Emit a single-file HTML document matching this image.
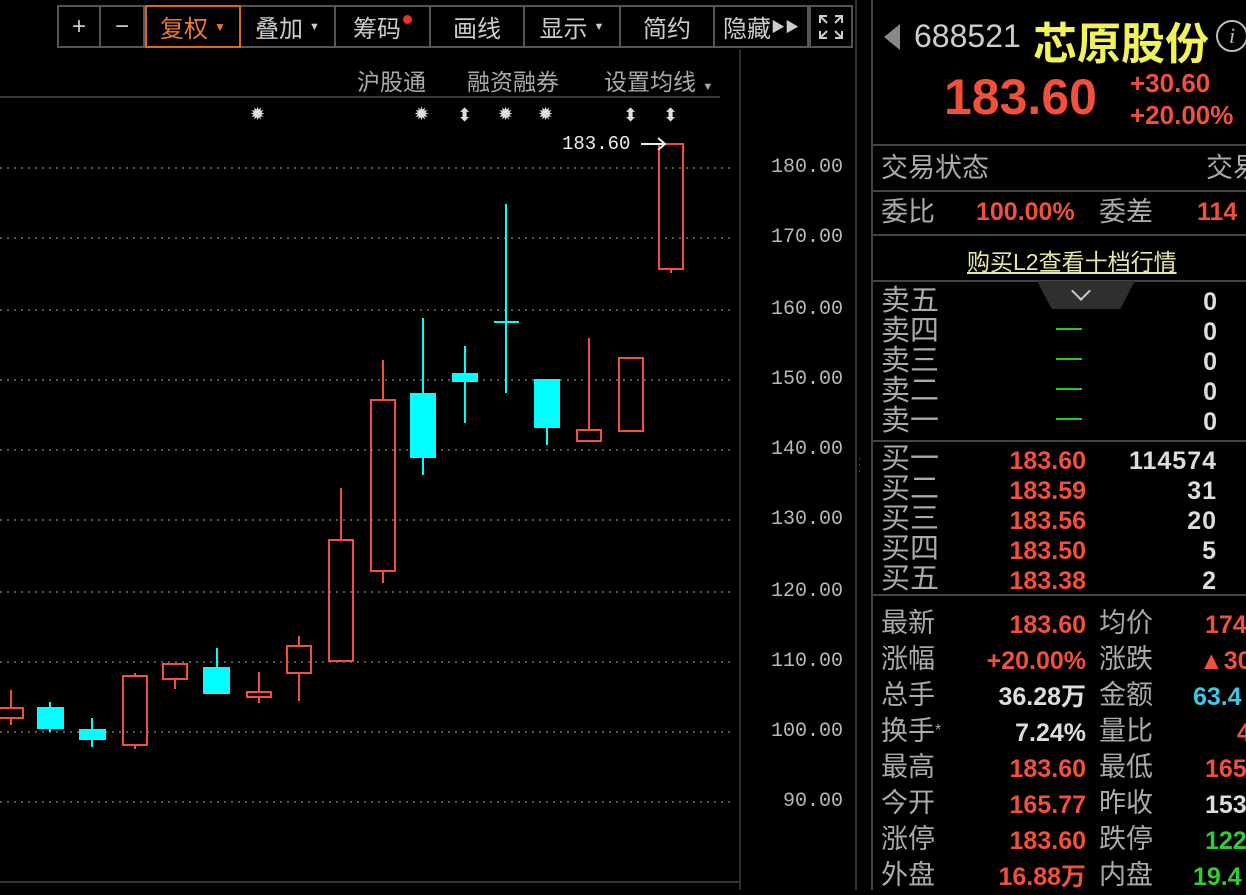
<!DOCTYPE html>
<html><head><meta charset="utf-8"><style>
*{margin:0;padding:0;box-sizing:border-box}
body{width:1246px;height:890px;background:#000;overflow:hidden;position:relative;font-family:"Liberation Sans","Noto Sans CJK SC",sans-serif;color:#b4b4b4}
.a{position:absolute;white-space:nowrap}
.tb{position:absolute;top:5px;height:43px;border:2px solid #555;border-left:none;font-size:24px;color:#ccc;display:flex;align-items:center;justify-content:center}
.lbl{font-size:27px;color:#aaa;line-height:1}
.r{color:#f0503c}
.num{font-weight:bold;font-size:25px;line-height:1}
.hl{position:absolute;left:872px;width:374px;height:2px;background:#444}
.ax{font-family:"Liberation Mono",monospace;font-size:20px;color:#b8b8b8}
</style></head><body>
<!-- toolbar -->
<div class="tb" style="left:57px;width:44px;border-left:2px solid #555">+</div>
<div class="tb" style="left:101px;width:44px">−</div>
<div class="tb" style="left:145px;width:96px;border:2px solid #d86a1a;color:#e87a30">复权 <span style="font-size:12px;margin-left:6px">▼</span></div>
<div class="tb" style="left:241px;width:95px">叠加 <span style="font-size:11px;margin-left:6px">▼</span></div>
<div class="tb" style="left:336px;width:95px">筹码<span style="display:inline-block;width:9px;height:9px;border-radius:50%;background:#f03030;margin:-14px 0 0 2px"></span></div>
<div class="tb" style="left:431px;width:94px">画线</div>
<div class="tb" style="left:525px;width:96px">显示 <span style="font-size:11px;margin-left:6px">▼</span></div>
<div class="tb" style="left:621px;width:94px">简约</div>
<div class="tb" style="left:715px;width:94px">隐藏<span style="font-size:14px">▶▶</span></div>
<div class="tb" style="left:809px;width:44px;border-left:2px solid #555">
<svg width="28" height="28" viewBox="0 0 28 28" fill="none" stroke="#ccc" stroke-width="2"><path d="M3 10V3h7M3 3l7 7M25 10V3h-7M25 3l-7 7M3 18v7h7M3 25l7-7M25 18v7h-7M25 25l-7-7"/></svg></div>

<div class="a" style="left:357px;top:63px;font-size:23px;color:#aaa">沪股通</div>
<div class="a" style="left:467px;top:63px;font-size:23px;color:#aaa">融资融券</div>
<div class="a" style="left:604px;top:63px;font-size:23px;color:#aaa">设置均线 <span style="font-size:11px">▼</span></div>
<div class="a" style="left:0;top:96px;width:720px;height:2px;background:#3a3a3a"></div>

<!-- separators -->
<div class="a" style="left:739px;top:50px;width:2px;height:840px;background:#2e2e2e"></div>
<div class="a" style="left:855px;top:0;width:2px;height:890px;background:#333"></div>
<div class="a" style="left:871px;top:0;width:2px;height:890px;background:#444"></div>
<div class="a" style="left:0;top:881px;width:740px;height:2px;background:#333"></div>

<svg class="a" style="left:0;top:0" width="860" height="890">
<g stroke="#555" stroke-width="2" stroke-dasharray="2,5">
<line x1="0" y1="168" x2="735" y2="168"/><line x1="0" y1="238" x2="735" y2="238"/>
<line x1="0" y1="310" x2="735" y2="310"/><line x1="0" y1="380" x2="735" y2="380"/>
<line x1="0" y1="450" x2="735" y2="450"/><line x1="0" y1="520" x2="735" y2="520"/>
<line x1="0" y1="592" x2="735" y2="592"/><line x1="0" y1="662" x2="735" y2="662"/>
<line x1="0" y1="732" x2="735" y2="732"/><line x1="0" y1="802" x2="735" y2="802"/>
</g>
<g fill="#ddd" font-size="18" font-family="DejaVu Sans">
<text x="250" y="120">✹</text><text x="414" y="120">✹</text><text x="498" y="120">✹</text><text x="538" y="120">✹</text>
<text x="457" y="121">⬍</text><text x="623" y="121">⬍</text><text x="663" y="121">⬍</text>
</g>
<g stroke="#f0503c" stroke-width="2" fill="none">
<line x1="11" y1="690" x2="11" y2="708"/><line x1="11" y1="718" x2="11" y2="725"/><rect x="-2" y="708" width="25" height="10"/>
<line x1="135" y1="673" x2="135" y2="676"/><line x1="135" y1="745" x2="135" y2="749"/><rect x="123" y="676" width="24" height="69"/>
<line x1="175" y1="679" x2="175" y2="689"/><rect x="163" y="664" width="24" height="15"/>
<line x1="259" y1="672" x2="259" y2="692"/><line x1="259" y1="697" x2="259" y2="703"/><rect x="247" y="692" width="24" height="5"/>
<line x1="299" y1="636" x2="299" y2="646"/><line x1="299" y1="673" x2="299" y2="701"/><rect x="287" y="646" width="24" height="27"/>
<line x1="341" y1="488" x2="341" y2="540"/><rect x="329" y="540" width="24" height="121"/>
<line x1="383" y1="360" x2="383" y2="400"/><line x1="383" y1="571" x2="383" y2="583"/><rect x="371" y="400" width="24" height="171"/>
<line x1="589" y1="338" x2="589" y2="430"/><rect x="577" y="430" width="24" height="11"/>
<rect x="619" y="358" width="24" height="73"/>
<line x1="671" y1="269" x2="671" y2="273"/><rect x="659" y="144" width="24" height="125"/>
</g>
<g stroke="#00ffff" stroke-width="2" fill="#00ffff">
<line x1="50" y1="702" x2="50" y2="732"/><rect x="38" y="708" width="25" height="20"/>
<line x1="92" y1="718" x2="92" y2="747"/><rect x="80" y="730" width="25" height="9"/>
<line x1="217" y1="648" x2="217" y2="693"/><rect x="204" y="668" width="25" height="25"/>
<line x1="423" y1="318" x2="423" y2="475"/><rect x="411" y="394" width="24" height="63"/>
<line x1="465" y1="346" x2="465" y2="423"/><rect x="453" y="374" width="24" height="7"/>
<line x1="506" y1="204" x2="506" y2="393"/><line x1="494" y1="322" x2="519" y2="322"/>
<line x1="547" y1="380" x2="547" y2="445"/><rect x="535" y="380" width="24" height="47"/>
</g>
<text x="562" y="149" fill="#eee" font-size="19" font-family="Liberation Mono">183.60</text>
<path d="M641 144h24M658 138l7 6-7 6" stroke="#eee" stroke-width="2" fill="none"/>
<g fill="#444"><rect x="859" y="458" width="2" height="2"/><rect x="863" y="458" width="2" height="2"/><rect x="859" y="464" width="2" height="2"/><rect x="863" y="464" width="2" height="2"/><rect x="859" y="470" width="2" height="2"/><rect x="863" y="470" width="2" height="2"/></g>
</svg>
<!-- axis -->
<div class="a ax" style="left:771px;top:156px">180.00</div>
<div class="a ax" style="left:771px;top:226px">170.00</div>
<div class="a ax" style="left:771px;top:298px">160.00</div>
<div class="a ax" style="left:771px;top:368px">150.00</div>
<div class="a ax" style="left:771px;top:438px">140.00</div>
<div class="a ax" style="left:771px;top:508px">130.00</div>
<div class="a ax" style="left:771px;top:580px">120.00</div>
<div class="a ax" style="left:771px;top:650px">110.00</div>
<div class="a ax" style="left:771px;top:720px">100.00</div>
<div class="a ax" style="left:783px;top:790px">90.00</div>

<!-- right panel -->
<div class="a" style="left:884px;top:24px;width:0;height:0;border-top:13px solid transparent;border-bottom:13px solid transparent;border-right:16px solid #888"></div>
<div class="a" style="left:914px;top:18px;font-size:32px;color:#ccc">688521</div>
<div class="a" style="left:1033px;top:8px;font-size:44px;font-weight:bold;color:#f2f25a">芯原股份</div>
<div class="a" style="left:1216px;top:20px;width:32px;height:32px;border:2px solid #bbb;border-radius:50%;color:#bbb;font-size:22px;font-style:italic;font-family:'Liberation Serif';text-align:center;line-height:28px">i</div>
<div class="a r" style="left:944px;top:68px;font-size:50px;font-weight:bold">183.60</div>
<div class="a r num" style="left:1130px;top:70px;font-size:26px">+30.60</div>
<div class="a r num" style="left:1130px;top:102px;font-size:26px">+20.00%</div>
<div class="hl" style="top:144px"></div>
<div class="a lbl" style="left:881px;top:155px">交易状态</div>
<div class="a lbl" style="left:1206px;top:155px">交易</div>
<div class="hl" style="top:190px"></div>
<div class="a lbl" style="left:881px;top:199px">委比</div>
<div class="a r num" style="left:976px;top:200px">100.00%</div>
<div class="a lbl" style="left:1099px;top:199px">委差</div>
<div class="a r num" style="left:1197px;top:200px">114</div>
<div class="hl" style="top:234px"></div>
<div class="a" style="left:967px;top:243px;font-size:23px;color:#e8e8a0;text-decoration:underline">购买L2查看十档行情</div>
<div class="hl" style="top:280px"></div>
<div class="a" style="left:1037px;top:281px;width:98px;height:28px;background:#2f2f2f;clip-path:polygon(0 0,100% 0,85% 100%,15% 100%)"></div>
<div class="a" style="left:1074px;top:284px;width:14px;height:14px;border-right:2px solid #ccc;border-bottom:2px solid #ccc;transform:rotate(45deg)"></div>

<div class="a lbl" style="left:881px;top:286px;line-height:30px;font-size:29px">卖五<br>卖四<br>卖三<br>卖二<br>卖一</div>
<div class="a" style="left:1056px;top:328px;width:26px;height:2px;background:#2c2"></div>
<div class="a" style="left:1056px;top:358px;width:26px;height:2px;background:#2c2"></div>
<div class="a" style="left:1056px;top:388px;width:26px;height:2px;background:#2c2"></div>
<div class="a" style="left:1056px;top:418px;width:26px;height:2px;background:#2c2"></div>
<div class="a num" style="left:1199px;top:287px;line-height:30px;color:#ddd;text-align:right;width:18px">0<br>0<br>0<br>0<br>0</div>
<div class="hl" style="top:440px"></div>
<div class="a lbl" style="left:881px;top:444px;line-height:30px;font-size:29px">买一<br>买二<br>买三<br>买四<br>买五</div>
<div class="a r num" style="left:996px;top:446px;line-height:30px;text-align:right;width:90px">183.60<br>183.59<br>183.56<br>183.50<br>183.38</div>
<div class="a num" style="left:1100px;top:446px;line-height:30px;color:#ddd;text-align:right;width:117px;letter-spacing:1px">114574<br>31<br>20<br>5<br>2</div>
<div class="hl" style="top:594px"></div>

<div class="a lbl" style="left:881px;top:605px;line-height:36px">最新<br>涨幅<br>总手<br>换手<span style="font-size:16px;vertical-align:top">*</span><br>最高<br>今开<br>涨停<br>外盘</div>
<div class="a num" style="left:950px;top:607px;line-height:36px;text-align:right;width:136px">
<span class="r">183.60</span><br><span class="r">+20.00%</span><br><span style="color:#ddd">36.28万</span><br><span style="color:#ddd">7.24%</span><br><span class="r">183.60</span><br><span class="r">165.77</span><br><span class="r">183.60</span><br><span class="r">16.88万</span></div>
<div class="a lbl" style="left:1099px;top:605px;line-height:36px">均价<br>涨跌<br>金额<br>量比<br>最低<br>昨收<br>跌停<br>内盘</div>
<div class="a num" style="left:1173px;top:607px;line-height:36px;width:90px">
<span class="r" style="margin-left:32px">174</span><br><span class="r" style="margin-left:26px">▲30</span><br><span style="color:#3cc8e8;margin-left:20px">63.4</span><br><span class="r" style="margin-left:64px">4</span><br><span class="r" style="margin-left:32px">165</span><br><span style="color:#ddd;margin-left:32px">153</span><br><span style="color:#3c3;margin-left:32px">122</span><br><span style="color:#3c3;margin-left:20px">19.4</span></div>
</body></html>
